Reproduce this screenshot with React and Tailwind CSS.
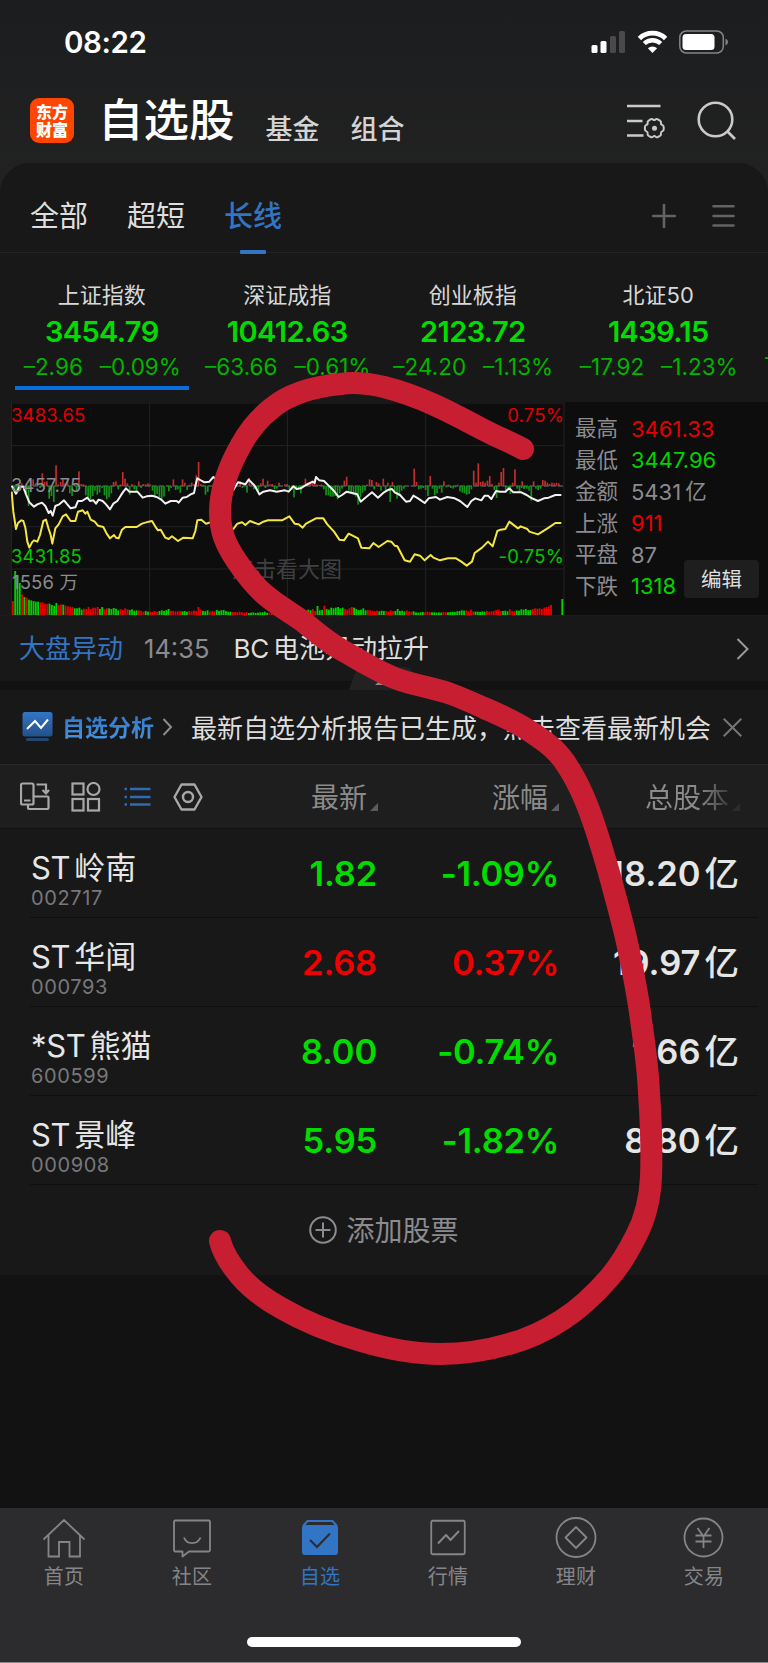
import React from 'react';

const INDEXES = [
	{ name: '上证指数', value: '3454.79', change: '–2.96', percent: '–0.09%', active: true },
	{ name: '深证成指', value: '10412.63', change: '–63.66', percent: '–0.61%' },
	{ name: '创业板指', value: '2123.72', change: '–24.20', percent: '–1.13%' },
	{ name: '北证50', value: '1439.15', change: '–17.92', percent: '–1.23%' },
];

const SUMMARY = [
	{ label: '最高', value: '3461.33', color: 'text-[#e60000]' },
	{ label: '最低', value: '3447.96', color: 'text-[#00d200]' },
	{ label: '金额', value: '5431', unit: '亿', color: 'text-[#8b8b90]' },
	{ label: '上涨', value: '911', color: 'text-[#e60000]' },
	{ label: '平盘', value: '87', color: 'text-[#8b8b90]' },
	{ label: '下跌', value: '1318', color: 'text-[#00d200]' },
];

const STOCKS = [
	{ prefix: 'ST', name: '岭南', code: '002717', price: '1.82', percent: '-1.09%', shares: '18.20' },
	{ prefix: 'ST', name: '华闻', code: '000793', price: '2.68', percent: '0.37%', shares: '19.97', up: true },
	{ prefix: '*ST', name: '熊猫', code: '600599', price: '8.00', percent: '-0.74%', shares: '1.66' },
	{ prefix: 'ST', name: '景峰', code: '000908', price: '5.95', percent: '-1.82%', shares: '8.80' },
];

// chart units are a third of a pixel
const INDEX_LINE =
	'35,272 48,296 58,275 70,275 78,298 88,322 102,335 112,328 126,323 136,333 146,354 152,348 158,362 166,333 178,328 192,316 200,326 212,340 226,337 234,318 246,318 262,308 270,318 280,316 288,326 296,314 308,318 318,328 330,343 340,326 352,318 362,302 370,290 378,280 388,290 412,290 428,308 440,304 456,302 470,306 484,314 496,326 512,318 530,318 536,323 548,308 560,306 572,298 582,294 588,265 592,250 606,258 614,262 628,260 640,246 655,260 680,290 700,285 714,262 736,268 746,254 764,272 778,298 790,290 810,286 830,290 855,286 866,290 880,274 890,282 902,280 918,270 938,260 944,264 948,246 958,256 972,258 986,272 1002,288 1016,306 1026,300 1040,290 1072,298 1082,320 1096,308 1116,292 1134,308 1152,292 1166,284 1176,282 1184,292 1200,300 1218,320 1230,318 1240,302 1254,310 1274,324 1286,310 1308,306 1320,314 1342,306 1364,310 1380,318 1402,336 1414,318 1426,310 1444,316 1454,302 1464,302 1474,312 1488,288 1500,290 1516,290 1528,280 1540,292 1564,292 1580,300 1592,308 1614,318 1632,310 1646,308 1666,300 1684,300';

const AVERAGE_LINE =
	'35,290 40,350 48,402 54,384 64,376 70,378 76,398 82,440 88,458 96,442 102,436 112,440 120,420 130,378 138,374 146,402 152,420 157,446 166,400 176,388 188,364 198,358 212,378 226,378 234,350 248,346 256,356 262,350 272,374 284,380 294,392 310,396 320,416 330,430 342,420 348,428 356,430 366,404 376,396 410,396 426,386 446,380 456,378 468,398 474,406 482,404 496,428 506,432 516,424 534,438 550,428 578,430 586,408 592,376 604,374 618,386 632,382 660,380 690,402 700,402 712,386 726,382 736,390 750,378 776,388 790,380 804,376 846,376 868,364 884,386 896,388 908,398 918,386 948,370 970,370 982,388 1002,410 1018,434 1032,436 1046,416 1074,430 1084,458 1108,460 1120,444 1136,456 1162,438 1174,440 1184,452 1192,454 1214,496 1230,500 1244,478 1260,482 1274,496 1292,480 1300,488 1320,496 1344,490 1368,490 1384,500 1400,512 1416,500 1424,474 1446,458 1464,440 1478,454 1492,408 1502,404 1516,402 1528,380 1554,400 1562,394 1582,402 1588,410 1614,418 1646,398 1666,384 1684,384';

// [start x, height, height, ...], positive is drawn upwards in red
const MOMENTUM = [
	[42, -12, -24, -12, 8, -14, -22, -60],
	[97, 20, 8, 6, -6, 38, 12, 14, -38, -30, -48, 62, 5, 12, 20, 8, 16, -22, -30, 8, -14, 44, 6, 5, -28, -34, -40, -30, -14, -26, -20],
	[304, -6, -28, -40, -34, -22, 12, 14, -10, 5, 42, 22, 8, -26, 6, -10, -18, 14, -6, 6, 5, 8, 5, -14, -28, -24, -34, -38, -32],
	[504, -16, -6, 20, -12, -10, -20, 20, 10, -12, 4, 10, 6, 32, 72, 6, 4, -26, -18],
	[718, 14, -6, 6, -20, 24, 10, -10, -6, -14, 8, 22, -6, 16, 5, 6, -10, -8, 10],
	[852, 5, 6, -10, -12, -34, -12, -10, -22, 4, 22, 10, 8, 16, 20, 5, 3, 5, -10, -28, -28, -32, -32, -30, -40, -22, -8, 16, 28, -14, -18, -26, -32, -56, -34, -20, -14, 4, 20, 18, -10, 12, 8, -14, 22, -14, 10, -48, 12, -20, -38, -30, -14, -8],
	[1240, 52, 12, -10, -8, -6, -12, -30, 30, -8, -28, -22, -8, -20, 14, -4, 4, -6, -8, -4, 4, -16, -20, -22, -26, -24, -10, 46, 10, 68, 12, 14, 10, 16, 30, 6, -12, -36, 10, 42, 54, -20, -12, -24, 10, 50, -8, -20, -6, -8],
	[1564, 14, -8, -8, -14, -44, 14, -8, -12, -8, 18, 16, 10, 6, 10, 8, 10, 8],
];

// [colour, height, height, ...] laid out one after another
const VOLUME = [
	['r', 42], ['g', 132, 120, 96], ['r', 62], ['g', 54], ['r', 52], ['g', 46, 44, 42, 40, 40], ['r', 38, 38, 34, 33], ['g', 34, 30, 28, 36],
	['r', 30, 32], ['g', 31], ['r', 28, 26, 25, 24], ['g', 20, 20, 22, 16], ['r', 19, 18, 24, 18, 22, 22, 24], ['g', 18, 24],
	['r', 17, 20], ['g', 20, 18, 21, 19, 14], ['r', 18, 15, 20, 17], ['g', 15, 17, 13, 14], ['r', 14, 12, 10], ['g', 12, 10],
	['r', 10, 10, 12, 10], ['g', 12, 14, 12, 15, 18], ['r', 13, 12, 11, 11, 12], ['g', 11, 12, 10], ['r', 12, 11, 14, 12, 24, 16], ['g', 12, 11, 14],
	['r', 10, 12, 11], ['g', 15, 12, 14, 15, 12, 10, 10], ['r', 9, 9, 8, 10, 8, 7, 9], ['g', 6, 7, 8, 6, 7, 8, 8, 10, 7], ['r', 6, 7, 5, 6, 5, 6, 5], ['g', 6, 7, 8, 6, 8, 7, 8],
	['r', 10, 12, 14], ['g', 16, 14], ['r', 18, 12], ['g', 27, 14, 15], ['r', 28], ['g', 18, 16, 22, 20, 22, 24, 20, 22], ['r', 18, 16, 20, 24],
	['g', 22, 18, 15, 16, 20, 14], ['r', 15, 14, 13, 12, 13], ['g', 11, 13, 12], ['r', 12, 11, 14, 12], ['g', 12, 18, 12, 13, 11], ['r', 14, 11, 10],
	['g', 11, 8, 7, 8, 9], ['r', 8, 10, 9], ['g', 8, 8, 7, 8, 7], ['r', 9, 8], ['g', 8, 9, 10, 9, 11, 12, 14, 13], ['r', 14, 12, 16, 11], ['g', 10, 10, 9, 11, 10],
	['r', 12, 10, 11, 12, 15, 17, 12], ['g', 12, 13, 11], ['r', 17, 12, 12], ['g', 14, 13, 17, 16, 18, 14, 15], ['r', 18, 20, 19, 20, 18, 22, 24, 26, 30],
];

const TABS = [
	{ label: '首页', icon: HomeIcon },
	{ label: '社区', icon: CommunityIcon },
	{ label: '自选', icon: WatchlistIcon, active: true },
	{ label: '行情', icon: MarketIcon },
	{ label: '理财', icon: WealthIcon },
	{ label: '交易', icon: TradeIcon },
];

function HomeIcon() {
	return (
		<svg width="44" height="44" viewBox="0 0 44 44" fill="none" stroke="currentColor" strokeWidth="1.8">
			<path d="M1.500 23.500 22 4l20.500 19.500M6.500 19v21.500h10.500V26h10.500v14.500H38V19" />
		</svg>
	);
}

function CommunityIcon() {
	return (
		<svg width="44" height="44" viewBox="0 0 44 44" fill="none" stroke="currentColor" strokeWidth="1.8" strokeLinejoin="round">
			<path d="M5.500 4.500h33q1.500 0 1.500 1.500v28q0 1.500-1.500 1.500H19l-6.500 5v-5h-7Q4 35.500 4 34V6q0-1.500 1.500-1.500Z" />
			<path d="M14 21.500c2.500 7.500 13.500 7.500 16.500 0" />
		</svg>
	);
}

function WatchlistIcon() {
	return (
		<svg width="44" height="44" viewBox="0 0 44 44" fill="none">
			<path d="m5 10 4.500-5h25l4.500 5" stroke="currentColor" strokeWidth="2" />
			<rect x="4" y="9" width="36" height="30" rx="3" fill="currentColor" />
			<path d="m12 24 7 7 13-13.500" stroke="#2c2c2e" strokeWidth="2" />
		</svg>
	);
}

function MarketIcon() {
	return (
		<svg width="44" height="44" viewBox="0 0 44 44" fill="none" stroke="currentColor" strokeWidth="1.8" strokeLinejoin="round">
			<rect x="5.250" y="4.750" width="33.500" height="33.500" rx="1.500" />
			<path d="m12 27.500 8-8.500 4.500 5 8.500-9" strokeWidth="2" />
		</svg>
	);
}

function WealthIcon() {
	return (
		<svg width="44" height="44" viewBox="0 0 44 44" fill="none" stroke="currentColor" strokeWidth="1.8">
			<circle cx="22" cy="21.500" r="19.500" />
			<path d="M22 11 32.500 21.500 22 32 11.500 21.500Z" strokeLinejoin="round" />
		</svg>
	);
}

function TradeIcon() {
	return (
		<svg width="44" height="44" viewBox="0 0 44 44" fill="none" stroke="currentColor" strokeWidth="1.8">
			<circle cx="21.500" cy="21.500" r="19" />
			<path d="m15.500 12 6 8.500 6-8.500M21.500 20.500v11.500M13.500 19.500h16M13.500 25.500h16" />
		</svg>
	);
}

const StatusBar = () => (
	<div className="flex h-[84px] items-center justify-between pl-[64px] pr-[39px] text-white">
		<span className="pt-px text-[29.500px] font-semibold leading-none tracking-[-0.400px]">08:22</span>
		<div className="flex items-center">
			<svg width="36" height="22" viewBox="0 0 36 22" fill="#fff">
				<rect x="0.500" y="14" width="6" height="8" rx="1.500" />
				<rect x="9.500" y="10" width="6" height="12" rx="1.500" />
				<rect x="19" y="5" width="6" height="17" rx="1.500" fill="#4a4a4c" />
				<rect x="28" y="0" width="6" height="22" rx="1.500" fill="#4a4a4c" />
			</svg>
			<svg className="ml-[10px]" width="32" height="24" viewBox="0 0 32 24" fill="none" stroke="#fff" strokeWidth="4.800">
				<path d="M2.400 8.400a19 19 0 0 1 26.200 0" />
				<path d="M7.300 13.500a12 12 0 0 1 16.400 0" strokeWidth="4.400" />
				<path d="M15.500 23l-4.600-4.700a6.800 6.800 0 0 1 9.200 0Z" fill="#fff" stroke="none" />
			</svg>
			<svg className="ml-[10px]" width="50" height="24" viewBox="0 0 50 24" fill="none">
				<rect x="0.800" y="1" width="43.500" height="22" rx="6.500" stroke="#858587" strokeWidth="1.500" />
				<rect x="3.500" y="4" width="32" height="16" rx="3.500" fill="#fff" />
				<path d="M46.500 8.500q2.500 1 2.500 3.500t-2.500 3.500Z" fill="#858587" />
			</svg>
		</div>
	</div>
);

const TitleBar = () => (
	<div className="flex h-[79px] items-start pl-[30px] pr-[31px]">
		<div className="mt-[14px] flex h-[45px] w-[44px] flex-col items-center justify-center rounded-[9px] bg-[#ff4500] text-[16px] font-black leading-[18px] text-white">
			<span>东方</span>
			<span>财富</span>
		</div>
		<h1 className="ml-[24px] mt-[14px] text-[45.500px] font-medium leading-[46px] text-white">自选股</h1>
		<span className="ml-[31px] mt-[32px] text-[27px] font-medium leading-[28px] text-[#d4d4d4]">基金</span>
		<span className="ml-[31px] mt-[32px] text-[27px] font-medium leading-[28px] text-[#d4d4d4]">组合</span>
		<svg className="ml-auto mt-[17px]" width="42" height="40" viewBox="0 0 42 40" fill="none" stroke="#cacaca" strokeWidth="2.600">
			<path d="M1 5h33.500M1 20h15.500M1 34.500h16.500" />
			<path
				d="M25 17.900q1.500-.9 2.500.1 1.200 1.200 2.400 0 1-1 2.500-.1l2 1.200q1.500.9 1.100 2.300-.3 1.600 1.200 2 1.500.5 1.500 2.300v2q0 1.800-1.500 2.200-1.500.5-1.200 2 .4 1.500-1.100 2.400l-1.800 1q-1.500.9-2.600-.2-1.200-1.200-2.400 0-1.100 1.100-2.600.2l-1.800-1q-1.500-.9-1.100-2.400.3-1.500-1.200-2-1.500-.4-1.500-2.200v-2q0-1.800 1.500-2.300 1.500-.4 1.200-2-.4-1.400 1.100-2.300Z"
				strokeWidth="2"
				transform="translate(-0.500 0.500)"
			/>
			<circle cx="28.500" cy="27.300" r="2.500" fill="#cacaca" stroke="none" />
		</svg>
		<svg className="ml-[28px] mt-[17px]" width="41" height="40" viewBox="0 0 41 40" fill="none" stroke="#cacaca" strokeWidth="2.600">
			<circle cx="19.500" cy="18.500" r="16.800" />
			<path d="m31 30 8 8" />
		</svg>
	</div>
);

const GroupTabs = () => (
	<div className="flex h-[90px] items-start border-b border-[#232323] pl-[30px] pr-[33px] text-[29px] leading-[30px] text-[#dedede]">
		<span className="mt-[39px]">全部</span>
		<span className="ml-[39px] mt-[39px]">超短</span>
		<div className="ml-[39px] mt-[39px] flex flex-col items-center font-medium text-[#3275c4]">
			<span>长线</span>
			<span className="mt-[18px] h-[4px] w-[26px] rounded-[1px] bg-[#3275c4]" />
		</div>
		<svg className="ml-auto mt-[40px]" width="24" height="26" viewBox="0 0 24 26" stroke="#636363" strokeWidth="2.600" strokeLinecap="round">
			<path d="M1.200 13h21.600M12 2v22" />
		</svg>
		<svg className="ml-[36px] mt-[40px]" width="23" height="26" viewBox="0 0 23 26" stroke="#636363" strokeWidth="2.600" strokeLinecap="round">
			<path d="M1.500 3.200h20M1.500 13h20M1.500 22.500h20" />
		</svg>
	</div>
);

const IndexStrip = () => (
	<div className="flex h-[149px] overflow-hidden pl-[9px] leading-none">
		{INDEXES.map((item) => (
			<div key={item.name} className="flex w-[185.500px] shrink-0 flex-col items-center pt-[30px]">
				<span className="text-[22px] leading-[24px] text-[#d8d8d8]">{item.name}</span>
				<span className="mt-[10px] text-[29px] font-semibold leading-[30px] tracking-[-0.600px] text-[#00dc00]">{item.value}</span>
				<div className="mt-[7px] flex gap-[17px] pl-px text-[22.500px] leading-[26px] text-[#00b400]">
					<span>{item.change}</span>
					<span>{item.percent}</span>
				</div>
				{item.active && <span className="mt-[6px] h-[4px] w-[174px] bg-[#0b6ddb]" />}
			</div>
		))}
		<span className="mt-[91px] pl-[14px] text-[22.500px] leading-[26px] text-[#00b400]">–</span>
	</div>
);

const IndexChart = () => {
	let slot = -1;
	const volumeBars = VOLUME.flatMap(([color, ...heights]) =>
		heights.map((height) => {
			slot += 1;
			return { x: 36 + slot * 6.87, height, fill: color === 'r' ? '#e60000' : '#00d200' };
		})
	);

	return (
		<div className="relative h-[213px] w-[554px] text-[18.500px] leading-[20px] tracking-[0.150px]">
			<svg width="554" height="213" viewBox="33 21 1662 639" fill="none">
				<path d="M33 24H1695M33 152H1692M33 395H1692M33 522H1692M449 24V660M862 24V660M1277 24V660M1692 24V660M34.500 21V660" stroke="#232325" strokeWidth="3" />
				<path d="M35 273H1692" stroke="#8b8b90" strokeWidth="2.500" strokeDasharray="16 5" />
				{MOMENTUM.map(([start, ...heights]) =>
					heights.map((height, idx) => (
						<rect
							key={`${start}-${idx}`}
							x={start + idx * 6.87}
							y={height > 0 ? 273 - height : 273}
							width="5"
							height={Math.abs(height)}
							fill={height > 0 ? '#c42d2d' : '#14921a'}
						/>
					))
				)}
				{volumeBars.map((bar) => (
					<rect key={bar.x} x={bar.x} y={660 - bar.height} width="5.500" height={bar.height} fill={bar.fill} />
				))}
				<rect x="1684" y="612" width="6" height="48" fill="#00d200" />
				<polyline points={AVERAGE_LINE} stroke="#f5e642" strokeWidth="6" strokeLinejoin="round" />
				<polyline points={INDEX_LINE} stroke="#f2f2f2" strokeWidth="6" strokeLinejoin="round" />
			</svg>
			<span className="absolute left-0 top-[3px] text-[#e00000]">3483.65</span>
			<span className="absolute left-0 top-[73px] text-[#8b8b90]">3457.75</span>
			<span className="absolute left-0 top-[144px] text-[#00c800]">3431.85</span>
			<span className="absolute left-px top-[170px] text-[#8b8b90]">1556 万</span>
			<span className="absolute right-px top-[3px] text-[#e00000]">0.75%</span>
			<span className="absolute right-px top-[144px] text-[#00c800]">-0.75%</span>
			<span className="absolute left-[221px] top-[155px] text-[22px] leading-[24px] tracking-normal text-[#404042]">点击看大图</span>
		</div>
	);
};

const MarketSummary = () => (
	<div className="relative flex-1 pl-[10px] pt-[11px]">
		{SUMMARY.map((row) => (
			<div key={row.label} className="flex h-[31.500px] items-center text-[22px] leading-none">
				<span className="w-[56px] text-[21.500px] text-[#8b8b90]">{row.label}</span>
				<span className={row.color}>{row.value}</span>
				{row.unit && <span className="ml-[4px] text-[21.500px] text-[#8b8b90]">{row.unit}</span>}
			</div>
		))}
		<button type="button" className="absolute right-[9px] top-[158px] h-[38px] w-[75px] rounded-[4px] bg-[#1e1e1f] pt-[2px] text-[20.500px] leading-none text-[#dedede]">
			编辑
		</button>
	</div>
);

const NewsTicker = () => (
	<div className="relative flex h-[66px] items-center border-t border-[#1c1c1c] pl-[19px] pr-[19px] text-[26px] leading-none">
		<span className="text-[#3275c4]">大盘异动</span>
		<span className="ml-[21px] text-[25.500px] text-[#8b8b90]">14:35</span>
		<span className="ml-[24px] tracking-[-0.300px] text-[#dedede]">BC</span>
		<span className="ml-[4px] text-[#dedede]">电池异动拉升</span>
		<svg className="ml-auto" width="13" height="22" viewBox="0 0 13 22" fill="none" stroke="#9a9a9a" strokeWidth="2">
			<path d="m1.500 1 10 10-10 10" />
		</svg>
		<svg className="absolute left-[349px] top-[51px]" width="70" height="23" viewBox="0 0 70 23" fill="none">
			<path d="M0 23 6 6Q8 0 14 0h42q6 0 8 6l6 17Z" fill="#222223" />
			<path d="m26 18 9-8 9 8Z" fill="#8b8b90" />
		</svg>
	</div>
);

const AnalysisBanner = () => (
	<div className="flex h-[75px] items-center border-b border-[#282828] pl-[22px] pr-[26px] leading-none">
		<svg className="mt-[-1px]" width="31" height="30" viewBox="0 0 31 30" fill="none">
			<defs>
				<linearGradient id="badge" x1="0" y1="0" x2="0" y2="1">
					<stop offset="0" stopColor="#3275c4" />
					<stop offset="1" stopColor="#24508a" />
				</linearGradient>
			</defs>
			<rect x="0.500" y="0" width="30" height="24.500" rx="2.500" fill="url(#badge)" />
			<rect x="4" y="26" width="23" height="3" rx="1.500" fill="#24466e" />
			<path d="m5 17 8-8 6 7 7-8.500" stroke="#fff" strokeWidth="2" />
		</svg>
		<span className="ml-[9px] mt-[2px] bg-linear-to-b from-[#3275c4] to-[#4a96e0] bg-clip-text text-[23px] font-bold leading-[28px] text-transparent">自选分析</span>
		<svg className="ml-[8px]" width="11" height="18" viewBox="0 0 11 18" fill="none" stroke="#8b8b90" strokeWidth="2">
			<path d="m1.500 1 7.500 8-7.500 8" />
		</svg>
		<span className="ml-[18px] mt-[3px] whitespace-nowrap text-[26px] text-[#dedede]">最新自选分析报告已生成，点击查看最新机会</span>
		<svg className="ml-auto" width="19" height="19" viewBox="0 0 19 19" stroke="#757577" strokeWidth="2">
			<path d="m.7.700 17.600 17.600M18.300.700.700 18.300" />
		</svg>
	</div>
);

const SortMark = ({ faded }) => (
	<svg className="ml-[3px] mt-[19px]" width="8" height="8" viewBox="0 0 8 8">
		<path d="M8 0v8H0Z" fill={faded ? '#2c2c2c' : '#5c5c60'} />
	</svg>
);

const TableHeader = () => (
	<div className="flex h-[64px] items-center border-b border-[#111] bg-[#1e1e1e] pl-[20px] text-[28px] leading-none text-[#8b8b8b]">
		<svg width="30" height="30" viewBox="0 0 30 30" fill="none" stroke="#a8a8a8" strokeWidth="2.200">
			<path d="M14 14.500h13.500q1 0 1 1v10.500q0 1-1 1H9q-1 0-1-1v-3" />
			<rect x="1" y="1.500" width="12.500" height="21" rx="1.500" fill="#1e1e1e" />
			<path d="M4 18.500h6.500M16.500 2.500H26v7M22.500 8l3.500 3.500L29 8" />
		</svg>
		<svg className="ml-[21px]" width="30" height="30" viewBox="0 0 30 30" fill="none" stroke="#a8a8a8" strokeWidth="2.200">
			<rect x="1.500" y="1.500" width="11" height="11" />
			<circle cx="22.500" cy="7" r="6" />
			<rect x="1.500" y="17" width="11" height="11.500" />
			<rect x="17" y="17" width="11" height="11.500" />
		</svg>
		<svg className="ml-[23px]" width="27" height="20" viewBox="0 0 27 20" stroke="#2f6bb5" strokeWidth="2.600">
			<path d="M6 2h20.500M6 10h20.500M6 17.500h20.500M.500 2h2.500M.500 10h2.500M.500 17.500h2.500" />
		</svg>
		<svg className="ml-[22px]" width="30" height="28" viewBox="0 0 30 28" fill="none" stroke="#a8a8a8" strokeWidth="2.400">
			<path d="M8.500 1.500h13L28.500 14l-7 12.500h-13L1.500 14Z" strokeLinejoin="round" />
			<circle cx="15" cy="14" r="5" />
		</svg>
		<div className="ml-[108px] mt-[2px] flex">
			<span>最新</span>
			<SortMark />
		</div>
		<div className="ml-[114px] mt-[2px] flex">
			<span>涨幅</span>
			<SortMark />
		</div>
		<div className="ml-[86px] mt-[2px] flex">
			<span className="bg-linear-to-r from-[#8b8b8b] from-65% to-[#3a3a3a] bg-clip-text text-transparent">总股本</span>
			<SortMark faded />
		</div>
	</div>
);

const StockRow = ({ stock }) => {
	const tone = stock.up ? 'text-[#f00000]' : 'text-[#00dc00]';
	return (
		<div className="ml-[30px] mr-[10px] flex h-[89px] border-b border-[#0f0f0f] text-[#e6e6e6]">
			<div className="flex w-[180px] flex-col pl-px pt-[22px]">
				<div className="flex gap-[4px] text-[31px] leading-[34px]">
					<span className="tracking-[-0.300px]">{stock.prefix}</span>
					<span>{stock.name}</span>
				</div>
				<span className="mt-[2px] text-[20px] leading-[22px] tracking-[0.600px] text-[#77777c]">{stock.code}</span>
			</div>
			<span className={`w-[167px] pt-[27px] text-right text-[34.500px] font-semibold leading-[36px] tracking-[-0.200px] ${tone}`}>{stock.price}</span>
			<span className={`w-[182px] pt-[27px] text-right text-[34.500px] font-semibold leading-[36px] tracking-[-0.300px] ${tone}`}>{stock.percent}</span>
			<div className="flex w-[180px] justify-end gap-[4px] pt-[27px] text-[34.500px] font-semibold leading-[36px]">
				<span>{stock.shares}</span>
				<span className="font-medium">亿</span>
			</div>
		</div>
	);
};

const BottomNav = () => (
	<nav className="flex h-[155px] flex-col items-center border-b border-[#8a8a8a] bg-[#2c2c2e]">
		<div className="flex w-full pt-[8px]">
			{TABS.map(({ label, icon: Icon, active }) => (
				<div key={label} className={`flex w-[128px] flex-col items-center ${active ? 'text-[#3275c4]' : 'text-[#858589]'}`}>
					<Icon />
					<span className="mt-[5px] text-[20px] leading-[24px] tracking-[0.300px]">{label}</span>
				</div>
			))}
		</div>
		<div className="mt-[48px] h-[10px] w-[274px] rounded-full bg-white" />
	</nav>
);

const MarkerStroke = () => (
	<svg className="pointer-events-none absolute left-0 top-0 blur-[0.600px]" width="768" height="1663" viewBox="0 0 768 1663" fill="none">
		<path
			d="M523 449C510 442 497 437 480 428C450 412 420 396 384 387C367 383 354 382 340 384C310 387 289 394 272 408C258 419 249 430 241 445C228 468 220 490 220 512C220 532 226 545 236 560C244 572 252 583 263 593C274 603 288 611 301 620C314 630 326 641 340 649C360 660 379 673 400 680C418 686 434 688 451 694C462 698 473 703 484 708C503 716 520 724 534 734C549 744 559 752 568 767C581 787 589 808 596 830C602 848 606 862 611 880C617 903 623 923 628 947C633 972 638 995 641 1020C645 1047 648 1068 649 1093C651 1122 652 1150 651 1177C650 1200 645 1219 636 1236C628 1252 621 1264 610 1277C596 1293 581 1308 562 1320C545 1331 528 1339 509 1344C485 1351 463 1354 440 1354C413 1354 388 1349 361 1341C333 1333 305 1322 281 1308C265 1299 251 1289 240 1276C230 1264 223 1253 220 1241"
			stroke="#c81e32"
			strokeWidth="22"
			strokeLinecap="round"
			strokeLinejoin="round"
		/>
	</svg>
);

const App = () => (
	<div className="relative flex h-[1663px] w-[768px] flex-col overflow-hidden bg-[#121212] font-['Inter','Noto_Sans_CJK_SC',sans-serif]">
		<div className="bg-linear-to-b from-[#1c1d1f] to-[#222222] to-[190px]">
			<StatusBar />
			<TitleBar />
			<div className="rounded-t-[30px] bg-[#181818]">
				<GroupTabs />
				<IndexStrip />
			</div>
		</div>
		<div className="flex bg-[#181818] pl-[11px]">
			<div className="flex flex-1 bg-[#0d0d0d]">
				<IndexChart />
				<MarketSummary />
			</div>
		</div>
		<div className="bg-[#181818]">
			<NewsTicker />
		</div>
		<div className="mt-[9px] bg-[#181818]">
			<AnalysisBanner />
			<TableHeader />
			{STOCKS.map((stock) => (
				<StockRow key={stock.code} stock={stock} />
			))}
			<div className="flex h-[90px] items-center justify-center text-[28px] leading-none text-[#8b8b90]">
				<svg className="mr-[9px]" width="28" height="28" viewBox="0 0 28 28" fill="none" stroke="currentColor" strokeWidth="2">
					<circle cx="14" cy="14" r="12.800" />
					<path d="M6.500 14h15M14 6.500v15" />
				</svg>
				<span className="mt-[2px]">添加股票</span>
			</div>
		</div>
		<div className="mt-auto">
			<BottomNav />
		</div>
		<MarkerStroke />
	</div>
);

export default App;
